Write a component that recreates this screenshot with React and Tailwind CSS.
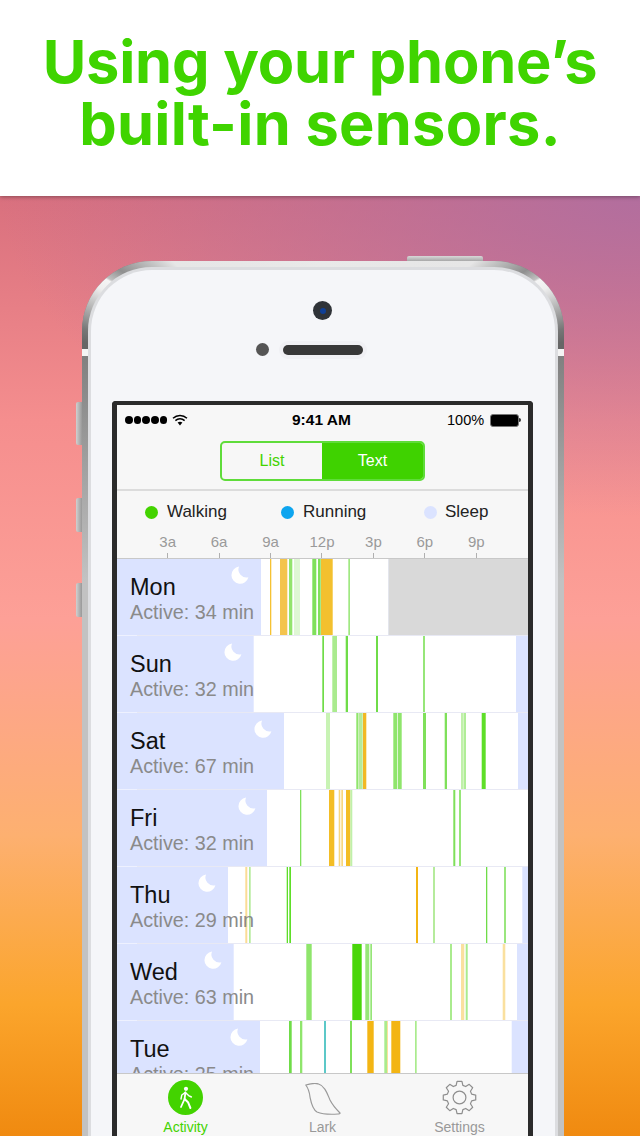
const DAYS = [
  {
    name: "Mon",
    active: "Active: 34 min",
    from: 261,
    to: 388.5,
    moon: 240,
    rest: "#d9d9d9",
    bars: [
      [270, 271.3, "#f6c233"],
      [280, 287.3, "#f4c44e"],
      [289, 292.3, "#93e46d"],
      [294, 300, "#dff7d4"],
      [312.3, 316.3, "#7fe05a"],
      [318, 320.7, "#7fe05a"],
      [321, 332.7, "#f3c02e"],
      [348.3, 350, "#a0e882"],
    ],
  },
  {
    name: "Sun",
    active: "Active: 32 min",
    from: 253.7,
    to: 516,
    moon: 233,
    bars: [
      [322.3, 324, "#6fdc48"],
      [332.3, 337, "#aaeb8e"],
      [345.7, 348, "#6fdc48"],
      [376, 378, "#6fdc48"],
      [423, 425, "#96e678"],
    ],
  },
  {
    name: "Sat",
    active: "Active: 67 min",
    from: 284,
    to: 518,
    moon: 263,
    bars: [
      [326, 330, "#c8f3b4"],
      [356.3, 358, "#8fe56c"],
      [358.3, 362.7, "#b5eb9c"],
      [363, 366.3, "#f2b824"],
      [393.3, 397.3, "#8fe56c"],
      [398, 401.7, "#8fe56c"],
      [423, 426, "#7fe05a"],
      [444.7, 447, "#7fe05a"],
      [461, 463.7, "#c0f0aa"],
      [464.3, 465.7, "#8fe56c"],
      [481.7, 485.7, "#5ede28"],
    ],
  },
  {
    name: "Fri",
    active: "Active: 32 min",
    from: 267,
    to: 528,
    moon: 247,
    bars: [
      [300, 301.3, "#7fe05a"],
      [329, 334.3, "#f3bd25"],
      [338.7, 340.3, "#f8d77f"],
      [341.3, 343, "#f8d77f"],
      [346, 350.3, "#f3bd25"],
      [350.3, 352.3, "#c0f0aa"],
      [453.3, 455.3, "#7fe05a"],
      [459, 461, "#96e678"],
    ],
  },
  {
    name: "Thu",
    active: "Active: 29 min",
    from: 228,
    to: 522.3,
    moon: 207,
    bars: [
      [245.3, 247.3, "#fbdc95"],
      [249, 250.7, "#b5eb9c"],
      [286.7, 288, "#5ede28"],
      [289.3, 291, "#5ede28"],
      [416, 418, "#f3b514"],
      [433, 435, "#b5eb9c"],
      [486, 487.3, "#6fdc48"],
      [504.3, 505.7, "#6fdc48"],
    ],
  },
  {
    name: "Wed",
    active: "Active: 63 min",
    from: 233.7,
    to: 517,
    moon: 213,
    bars: [
      [306.3, 311.7, "#8fe56c"],
      [352.3, 361.7, "#49d60a"],
      [365.3, 369.3, "#96e678"],
      [370.3, 372, "#96e678"],
      [450, 452, "#aaeb8e"],
      [461, 464.3, "#fae09f"],
      [465.7, 467.7, "#aaeb8e"],
      [502.7, 505.3, "#fae09f"],
    ],
  },
  {
    name: "Tue",
    active: "Active: 25 min",
    from: 260,
    to: 511.7,
    moon: 239,
    bars: [
      [289, 291.7, "#6fdc48"],
      [300, 302.3, "#8fe56c"],
      [324, 326, "#5cc8c8"],
      [350, 352, "#7fe05a"],
      [367.3, 373.7, "#f3b514"],
      [384.3, 387, "#aaeb8e"],
      [387, 388, "#fae09f"],
      [391.3, 400.3, "#f3b514"],
      [415, 416.7, "#aaeb8e"],
    ],
  },
];

const TICKS = ["3a", "6a", "9a", "12p", "3p", "6p", "9p"];

function gearPath() {
  const points = [];
  for (let i = 0; i < 8; i++) {
    const a = (i * Math.PI) / 4 - Math.PI / 2;
    const spots = [
      [12.6, -0.27],
      [16.4, -0.15],
      [16.4, 0.15],
      [12.6, 0.27],
    ];
    spots.forEach(([r, d]) => {
      points.push(`${(17.5 + r * Math.cos(a + d)).toFixed(2)} ${(17.5 + r * Math.sin(a + d)).toFixed(2)}`);
    });
  }
  return `M${points.join("L")}Z`;
}

function StatusBar() {
  return (
    <div className="h-[30px] flex items-center relative text-black">
      <div className="flex items-center gap-[1.2px] ml-[8px]">
        {[0, 1, 2, 3, 4].map((dot) => (
          <span key={dot} className="size-[7.5px] rounded-full bg-black" />
        ))}
      </div>
      <svg width="16" height="12" viewBox="0 0 16 12" className="ml-[5px]" fill="none" stroke="#000">
        <path d="M1 4.2C5 .6 11 .6 15 4.2" strokeWidth="1.5" />
        <path d="M3.4 6.6C6 4.2 10 4.2 12.6 6.6" strokeWidth="1.5" />
        <path d="M5.6 8.6C7 7.5 9 7.5 10.4 8.6L8 11.4Z" fill="#000" stroke="none" />
      </svg>
      <span className="absolute left-[175px] text-[15.5px] font-bold leading-none">9:41 AM</span>
      <span className="absolute left-[330px] text-[14.5px] leading-none">100%</span>
      <div className="absolute left-[373px] flex items-center">
        <div className="w-[29px] h-[13px] rounded-[3px] border border-[#777] bg-black" />
        <div className="w-[2px] h-[4px] bg-[#333] rounded-r-sm" />
      </div>
    </div>
  );
}

function Segments() {
  return (
    <div className="mt-[6px] ml-[103px] w-[205px] h-[40px] rounded-[5px] border-2 border-[#5fdc3a] flex overflow-hidden text-[16px]">
      <div className="w-[100px] flex justify-center items-center text-[#43d300]">List</div>
      <div className="flex-1 flex justify-center items-center bg-[#3fd200] text-white">Text</div>
    </div>
  );
}

function Legend() {
  return (
    <div className="h-[42px] flex items-center pl-[28px] text-[17px] text-[#222]">
      <div className="w-[136px] flex items-center gap-[9px]">
        <span className="size-[13px] rounded-full bg-[#43d300]" />
        Walking
      </div>
      <div className="w-[143px] flex items-center gap-[9px]">
        <span className="size-[13px] rounded-full bg-[#0ea5ef]" />
        Running
      </div>
      <div className="flex items-center gap-[8px]">
        <span className="size-[13px] rounded-full bg-[#dbe3ff]" />
        Sleep
      </div>
    </div>
  );
}

function Ticks() {
  return (
    <div className="border-b border-[#c8c8c8]">
      <div className="grid grid-cols-7 w-[360px] ml-[25px]">
        {TICKS.map((tick) => (
          <div key={tick} className="flex flex-col items-center">
            <span className="h-[18px] leading-[18px] text-[15px] text-[#9a9a9a]">{tick}</span>
            <span className="mt-[2px] w-px h-[5px] bg-[#b0b0b0]" />
          </div>
        ))}
      </div>
    </div>
  );
}

function DayRow({ day }) {
  const x = day.moon;
  return (
    <div className="h-[77px] relative bg-[#dbe3ff] overflow-hidden">
      <svg width="411" height="76" viewBox="117 0 411 76" className="absolute top-0 left-0">
        <rect x={day.from} y="0" width={day.to - day.from} height="76" fill="#fff" />
        {day.rest && <rect x={day.to} y="0" width={528 - day.to} height="76" fill={day.rest} />}
        {day.bars.map(([a, b, color]) => (
          <rect key={a} x={a} y="0" width={b - a} height="76" fill={color} />
        ))}
        <path
          d={`M${x - 1} 7.6A8.6 8.6 0 1 0 ${x + 8.4} 18.2A8 8 0 0 1 ${x - 1} 7.6Z`}
          fill="#fff"
        />
      </svg>
      <div className="relative pl-[13px] pt-[14px]">
        <div className="text-[23.5px] leading-[28px] text-[#111]">{day.name}</div>
        <div className="text-[19.75px] leading-[22px] text-[#8a8a8a] whitespace-nowrap">{day.active}</div>
      </div>
      <div className="absolute bottom-0 inset-x-0 h-px bg-[#e8e9f4] flex">
        <span className="w-[20px] bg-[#eef1ff]" />
      </div>
    </div>
  );
}

function TabBar() {
  return (
    <div className="h-[63px] border-t border-[#c8c8c8] bg-[#f7f7f7] grid grid-cols-3 text-[14px] leading-[16px] text-[#999]">
      <div className="flex flex-col items-center pt-[6px]">
        <svg width="35" height="35" viewBox="0 0 35 35">
          <circle cx="17.5" cy="17.5" r="17.5" fill="#43d300" />
          <circle cx="18" cy="8.8" r="2.1" fill="#fff" />
          <g fill="none" stroke="#fff" strokeWidth="1.8" strokeLinecap="round" strokeLinejoin="round">
            <path d="M17.4 12.4L16.6 19L13 27" />
            <path d="M16.6 19L20 22.2L22.4 28" strokeWidth="2" />
            <path d="M17.4 12.4L13.8 15L13 19" strokeWidth="1.4" />
            <path d="M17.4 12.4L20.6 15.6L23.4 17" strokeWidth="1.4" />
          </g>
        </svg>
        <span className="mt-[4px] text-[#43d300]">Activity</span>
      </div>
      <div className="flex flex-col items-center pt-[9px]">
        <svg width="36" height="32" viewBox="0 0 36 32" fill="none" stroke="#9a9a9a" strokeWidth="1.2" strokeLinejoin="round">
          <path d="M.8 2C5 .8 10 0 13 .8C20 3 22 10 25 17C28 23 32 27 35 30C35.3 30.8 34 31 33 31C26 31.5 18 31.5 12 29C7 26 6 19 5 14C4.5 9 3 5 .8 2Z" />
        </svg>
        <span className="mt-[4px]">Lark</span>
      </div>
      <div className="flex flex-col items-center pt-[6px]">
        <svg width="35" height="35" viewBox="0 0 35 35" fill="none" stroke="#8e8e8e" strokeWidth="1.2" strokeLinejoin="round">
          <path d={gearPath()} />
          <circle cx="17.5" cy="17.5" r="6.4" />
        </svg>
        <span className="mt-[4px]">Settings</span>
      </div>
    </div>
  );
}

function Screen() {
  return (
    <div className="mt-[45px] w-[421px] border-x-[5px] border-t-[4px] border-[#2b2b2b] rounded-t-[4px] bg-[#f7f7f7] [font-family:'Liberation_Sans',sans-serif]">
      <StatusBar />
      <Segments />
      <div className="mt-[8px] h-[2px] bg-[#dcdcdc]" />
      <Legend />
      <Ticks />
      <div className="h-[514px] overflow-hidden">
        {DAYS.map((day) => (
          <DayRow key={day.name} day={day} />
        ))}
      </div>
      <TabBar />
    </div>
  );
}

function Phone() {
  return (
    <div className="relative w-[482px] ml-[82px]">
      <div className="absolute left-[-6px] top-[141px] w-[6px] h-[43px] rounded-l-[2px] bg-[linear-gradient(90deg,#d0d0d0,#999)]" />
      <div className="absolute left-[-6px] top-[237px] w-[6px] h-[34px] rounded-l-[2px] bg-[linear-gradient(90deg,#d0d0d0,#999)]" />
      <div className="absolute left-[-6px] top-[322px] w-[6px] h-[34px] rounded-l-[2px] bg-[linear-gradient(90deg,#d0d0d0,#999)]" />
      <div className="absolute top-[-5px] left-[325px] w-[76px] h-[5px] rounded-t-[2px] bg-[linear-gradient(180deg,#d8d8d8,#a8a8a8)]" />

      <div className="relative overflow-hidden rounded-t-[70px] p-[6px] pb-0 bg-[linear-gradient(180deg,#808080_95px,#c2c2c2_320px)]">
        <div className="absolute top-0 inset-x-0 h-[88px] bg-[conic-gradient(at_50%_141px,#e9e9e9_0deg,#e6e6e6_47deg,#8f8f8f_57deg,#c0c0c0_60deg,#f5f5f5_60.5deg,#eeeeee_63deg,#777777_73deg,#666666_76deg,#666666_284deg,#777777_287deg,#eeeeee_297deg,#f5f5f5_299.5deg,#c0c0c0_300deg,#8f8f8f_303deg,#e6e6e6_313deg,#e9e9e9_360deg)]" />
        <div className="absolute top-[88px] left-0 w-[6px] h-[7px] bg-[#f4f4f4]" />
        <div className="absolute top-[88px] right-0 w-[6px] h-[7px] bg-[#f4f4f4]" />

        <div className="relative rounded-t-[64px] p-[3px] pb-0 bg-[#dcdde0]">
          <div className="rounded-t-[61px] bg-[#f5f6f9] flex flex-col items-center pr-px pb-[20px]">
            <div className="mt-[31px] size-[19px] rounded-full bg-[#2f3338] flex items-center justify-center">
              <span className="size-[6px] rounded-full bg-[#0f3f96]" />
            </div>
            <div className="mt-[23px] flex items-center gap-[14px] pr-[27px]">
              <span className="size-[13px] rounded-full bg-[#555]" />
              <span className="w-[80px] h-[10px] rounded-full bg-[#383838] shadow-[0_0_0_4px_#f0f0f4]" />
            </div>
            <Screen />
          </div>
        </div>
      </div>
    </div>
  );
}

export default function App() {
  return (
    <div className="w-[640px] h-[1136px] overflow-hidden flex flex-col">
      <header className="relative z-10 h-[196px] bg-white shadow-[0_1px_4px_rgba(0,0,0,0.35)] flex flex-col items-center pt-[30px] text-[#3fd400] text-[59.5px] leading-[62px] font-bold [font-family:Inter,sans-serif]">
        <div className="tracking-[-0.2px]">Using your phone’s</div>
        <div className="tracking-[0.3px]">built-in sensors.</div>
      </header>
      <main className="flex-1 overflow-hidden pt-[65px] bg-[radial-gradient(ellipse_640px_320px_at_100%_0%,rgba(176,110,160,0.95),rgba(176,110,160,0)),linear-gradient(180deg,#d9707e_0%,#f58e8e_24%,#fda097_45%,#fdb070_68%,#fba52c_86%,#f08a10_100%)]">
        <Phone />
      </main>
    </div>
  );
}
